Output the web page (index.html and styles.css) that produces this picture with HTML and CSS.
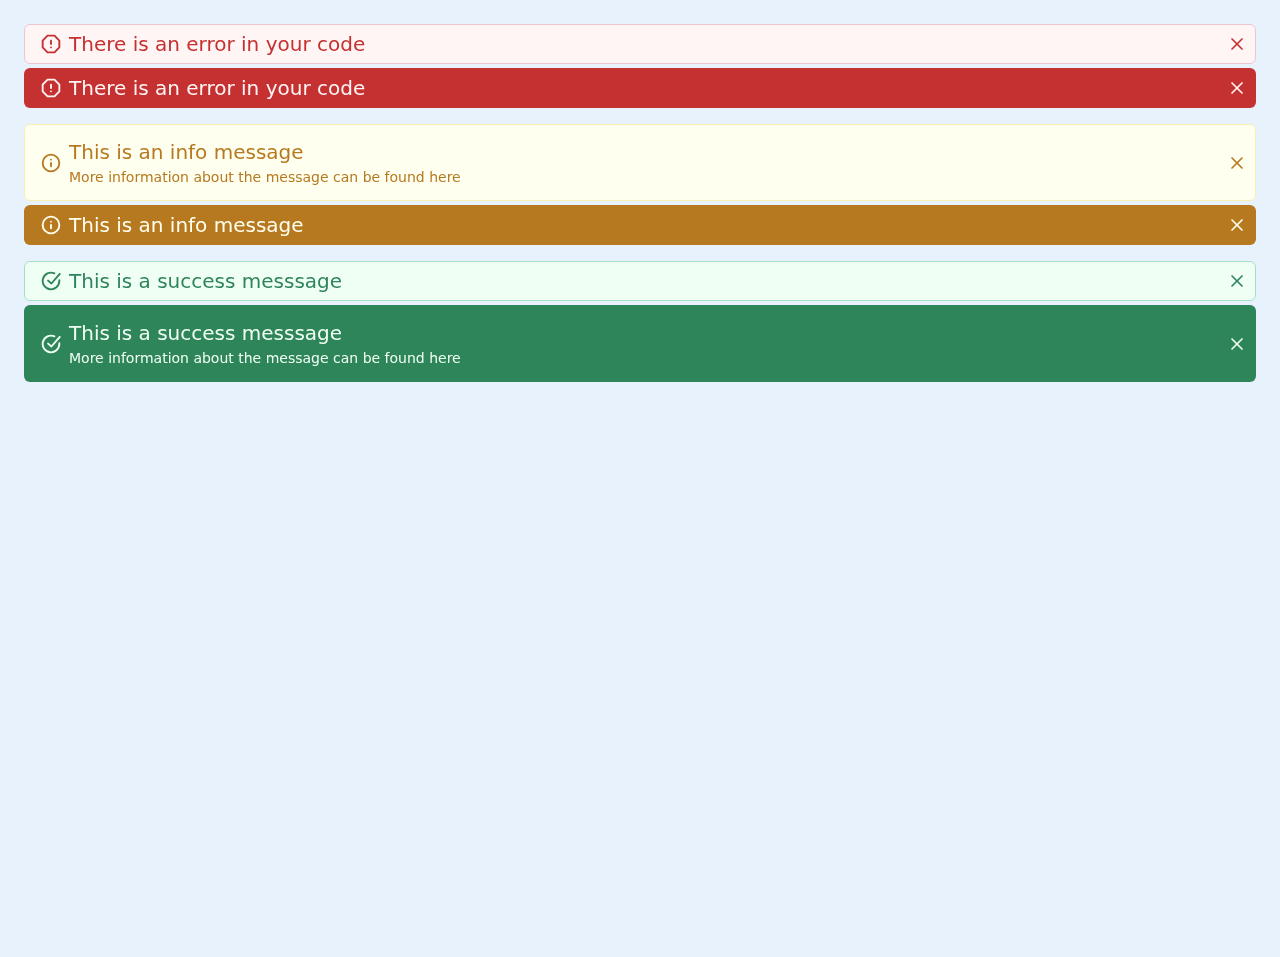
FILE: index.html
```html
<!DOCTYPE html>
<html lang="en">
<head>
<meta charset="utf-8">
<title>Alerts</title>
<link rel="stylesheet" href="styles.css">
</head>
<body>
<main class="page">
  <section class="group">
    <div class="alert error-light">
      <svg class="icon" viewBox="0 0 24 24"><polygon points="7.86 2 16.14 2 22 7.86 22 16.14 16.14 22 7.86 22 2 16.14 2 7.86 7.86 2"/><line x1="12" y1="8" x2="12" y2="12"/><line x1="12" y1="16" x2="12.01" y2="16"/></svg>
      <div class="body"><div class="title">There is an error in your code</div></div>
      <button class="close"><svg viewBox="0 0 24 24"><line x1="18" y1="6" x2="6" y2="18"/><line x1="6" y1="6" x2="18" y2="18"/></svg></button>
    </div>
    <div class="alert error-solid">
      <svg class="icon" viewBox="0 0 24 24"><polygon points="7.86 2 16.14 2 22 7.86 22 16.14 16.14 22 7.86 22 2 16.14 2 7.86 7.86 2"/><line x1="12" y1="8" x2="12" y2="12"/><line x1="12" y1="16" x2="12.01" y2="16"/></svg>
      <div class="body"><div class="title">There is an error in your code</div></div>
      <button class="close"><svg viewBox="0 0 24 24"><line x1="18" y1="6" x2="6" y2="18"/><line x1="6" y1="6" x2="18" y2="18"/></svg></button>
    </div>
  </section>
  <section class="group">
    <div class="alert multi info-light">
      <svg class="icon" viewBox="0 0 24 24"><circle cx="12" cy="12" r="10"/><line x1="12" y1="16" x2="12" y2="12"/><line x1="12" y1="8" x2="12.01" y2="8"/></svg>
      <div class="body"><div class="title">This is an info message</div><div class="desc">More information about the message can be found here</div></div>
      <button class="close"><svg viewBox="0 0 24 24"><line x1="18" y1="6" x2="6" y2="18"/><line x1="6" y1="6" x2="18" y2="18"/></svg></button>
    </div>
    <div class="alert info-solid">
      <svg class="icon" viewBox="0 0 24 24"><circle cx="12" cy="12" r="10"/><line x1="12" y1="16" x2="12" y2="12"/><line x1="12" y1="8" x2="12.01" y2="8"/></svg>
      <div class="body"><div class="title">This is an info message</div></div>
      <button class="close"><svg viewBox="0 0 24 24"><line x1="18" y1="6" x2="6" y2="18"/><line x1="6" y1="6" x2="18" y2="18"/></svg></button>
    </div>
  </section>
  <section class="group">
    <div class="alert success-light">
      <svg class="icon" viewBox="0 0 24 24"><path d="M22 11.08V12a10 10 0 1 1-5.93-9.14"/><polyline points="22.5 3.5 12.5 15 8.5 11.5"/></svg>
      <div class="body"><div class="title">This is a success messsage</div></div>
      <button class="close"><svg viewBox="0 0 24 24"><line x1="18" y1="6" x2="6" y2="18"/><line x1="6" y1="6" x2="18" y2="18"/></svg></button>
    </div>
    <div class="alert multi success-solid">
      <svg class="icon" viewBox="0 0 24 24"><path d="M22 11.08V12a10 10 0 1 1-5.93-9.14"/><polyline points="22.5 3.5 12.5 15 8.5 11.5"/></svg>
      <div class="body"><div class="title">This is a success messsage</div><div class="desc">More information about the message can be found here</div></div>
      <button class="close"><svg viewBox="0 0 24 24"><line x1="18" y1="6" x2="6" y2="18"/><line x1="6" y1="6" x2="18" y2="18"/></svg></button>
    </div>
  </section>
</main>
</body>
</html>
```

FILE: styles.css
```css
* { box-sizing: border-box; }
html, body { margin: 0; min-height: 100%; }
body {
  background: #e8f2fc;
  font-family: "DejaVu Sans", sans-serif;
  min-height: 957px;
}
.page {
  padding: 24px;
  display: flex;
  flex-direction: column;
  gap: 16px;
}
.group {
  display: flex;
  flex-direction: column;
  gap: 4px;
}
.alert {
  display: flex;
  align-items: center;
  gap: 8px;
  padding: 4px 8px 4px 16px;
  border: 1px solid transparent;
  border-radius: 6px;
  will-change: transform;
}
.alert.multi { padding-top: 12px; padding-bottom: 12px; }
.icon {
  flex: none;
  width: 20px;
  height: 20px;
  fill: none;
  stroke: currentColor;
  stroke-width: 2.25;
  stroke-linecap: round;
  stroke-linejoin: round;
}
.body { flex: 1; }
.title { font-size: 20px; line-height: 30px; }
.desc { font-size: 14px; line-height: 21px; }
.close {
  flex: none;
  width: 20px;
  height: 20px;
  padding: 0;
  border: 0;
  background: none;
  color: inherit;
  display: flex;
}
.close svg {
  width: 20px;
  height: 20px;
  fill: none;
  stroke: currentColor;
  stroke-width: 2;
  stroke-linecap: round;
}
.error-light { background: #fff5f5; border-color: #f0c4cc; color: #c53030; }
.error-solid { background: #c53030; color: #fff5f5; }
.info-light { background: #fffff0; border-color: #f5f0b0; color: #b7791f; }
.info-solid { background: #b7791f; color: #fffff0; }
.success-light { background: #f0fff4; border-color: #a0e0c0; color: #2f855a; }
.success-solid { background: #2f855a; color: #f0fff4; }
```
